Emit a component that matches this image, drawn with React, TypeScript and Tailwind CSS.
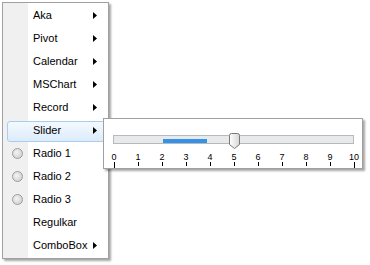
import React from 'react';

type Item = { label: string; arrow?: boolean; radio?: boolean; active?: boolean };

const items: Item[] = [
    { label: 'Aka', arrow: true },
    { label: 'Pivot', arrow: true },
    { label: 'Calendar', arrow: true },
    { label: 'MSChart', arrow: true },
    { label: 'Record', arrow: true },
    { label: 'Slider', arrow: true, active: true },
    { label: 'Radio 1', radio: true },
    { label: 'Radio 2', radio: true },
    { label: 'Radio 3', radio: true },
    { label: 'Regulkar' },
    { label: 'ComboBox', arrow: true },
];

function Arrow() {
    return (
        <svg width="4" height="7" viewBox="0 0 4 7" className="block">
            <path d="M0 0 L4 3.5 L0 7 Z" fill="#000" />
        </svg>
    );
}

function MenuRow({ item }: { item: Item }) {
    return (
        <div className="relative h-[23px] flex items-center">
            {item.active && (
                <div className="absolute left-[4px] right-[-4px] top-[2px] bottom-0 rounded-[3px] border border-[#a8cdef] bg-[linear-gradient(to_bottom,#f4f9fe,#dcecfb)]" />
            )}
            <div className="relative w-[30px] h-full flex items-center pl-[9px]">
                {item.radio && (
                    <div className="w-[11px] h-[11px] rounded-full border border-[#9c9c9c] bg-[radial-gradient(circle_at_40%_40%,#f4f4f4,#c8c8c8)]" />
                )}
            </div>
            <span className="relative flex-1 text-[11px] text-black leading-none">{item.label}</span>
            <div className="relative w-[4px] mr-[11px]">{item.arrow && <Arrow />}</div>
        </div>
    );
}

function SliderPopup() {
    const labels = Array.from({ length: 11 }, (_, i) => i);
    return (
        <div className="absolute left-[103px] top-[118px] w-[260px] h-[51px] border border-[#a0a0a0] bg-white shadow-[2px_2px_2px_rgba(0,0,0,0.35)]">
            <svg width="258" height="49" viewBox="-1 -1 258 49" className="block">
                <rect x="8.5" y="15.5" width="240" height="8" fill="#e7eaea" stroke="#b9b9b9" />
                <rect x="58" y="19" width="44" height="4" fill="#3592e8" />
                <defs>
                    <linearGradient id="thumb" x1="0" y1="0" x2="1" y2="0">
                        <stop offset="0" stopColor="#ffffff" />
                        <stop offset="1" stopColor="#d6d6d6" />
                    </linearGradient>
                </defs>
                <path
                    d="M124.5 15.5 Q124.5 13.5 126.5 13.5 L132.5 13.5 Q134.5 13.5 134.5 15.5 L134.5 24.5 L129.5 28.5 L124.5 24.5 Z"
                    fill="url(#thumb)"
                    stroke="#787878"
                />
                {labels.map((n) => (
                    <g key={n}>
                        <text
                            x={9 + n * 24}
                            y={40}
                            textAnchor="middle"
                            fontSize="9"
                            fontFamily="'Liberation Sans', Arial, sans-serif"
                            fill="#000"
                        >
                            {n}
                        </text>
                        <line
                            x1={9.5 + n * 24}
                            x2={9.5 + n * 24}
                            y1={42}
                            y2={n === 0 || n === 10 ? 48 : 46}
                            stroke="#000"
                        />
                    </g>
                ))}
            </svg>
        </div>
    );
}

export default function App() {
    return (
        <div className="relative w-[370px] h-[265px] bg-white font-['Liberation_Sans',Arial,sans-serif] overflow-hidden">
            <div className="ml-[2px] mt-[2px] w-[107px] flex flex-col border border-[#a0a0a0] py-[1px] bg-[linear-gradient(to_right,#f0f0f0_25px,#ffffff_25px)] shadow-[2px_2px_2px_rgba(0,0,0,0.35)]">
                {items.map((it) => (
                    <MenuRow key={it.label} item={it} />
                ))}
            </div>
            <SliderPopup />
        </div>
    );
}
